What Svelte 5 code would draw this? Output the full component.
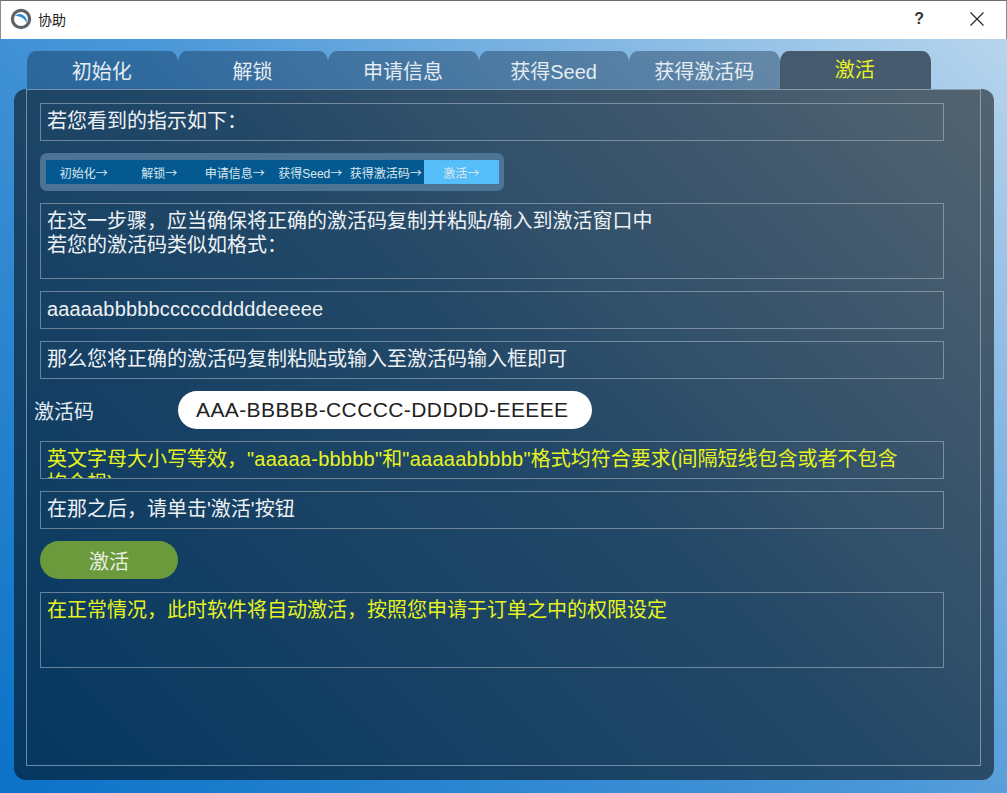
<script lang="ts">
	const tabs = ['初始化', '解锁', '申请信息', '获得Seed', '获得激活码', '激活'];
	const steps = ['初始化', '解锁', '申请信息', '获得Seed', '获得激活码', '激活'];
	const active = 5;
</script>

<div class="window">
	<header class="titlebar">
		<svg class="logo" width="22" height="22" viewBox="0 0 22 22" aria-hidden="true">
			<circle cx="11" cy="11" r="8.6" fill="#fff" stroke="#5c6268" stroke-width="3.2" />
			<path d="M5 8 A7 7 0 0 1 16.4 15 A11 11 0 0 0 5 8 Z" fill="#2b8ad6" />
		</svg>
		<span class="title">协助</span>
		<span class="spacer"></span>
		<span class="help">?</span>
		<svg class="close" width="14" height="14" viewBox="0 0 14 14" aria-hidden="true">
			<path d="M0.5 0.5 L13.5 13.5 M13.5 0.5 L0.5 13.5" stroke="#222" stroke-width="1.1" fill="none" />
		</svg>
	</header>

	<main class="body">
		<nav class="tabs">
			{#each tabs as tab, i}
				<div class="tab" class:active={i === active}>{tab}</div>
			{/each}
		</nav>

		<section class="panel">
			<div class="frame">
				<div class="box">若您看到的指示如下：</div>

				<div class="stepper">
					<div class="steps">
						{#each steps as step, i}
							<span class="step" class:current={i === active}>{step}<span class="arrow">→</span></span>
						{/each}
					</div>
				</div>

				<div class="box tall">在这一步骤，应当确保将正确的激活码复制并粘贴/输入到激活窗口中<br />若您的激活码类似如格式：</div>
				<div class="box latin">aaaaabbbbbcccccdddddeeeee</div>
				<div class="box">那么您将正确的激活码复制粘贴或输入至激活码输入框即可</div>

				<div class="field">
					<span class="label">激活码</span>
					<div class="input">AAA-BBBBB-CCCCC-DDDDD-EEEEE</div>
				</div>

				<div class="box yellow">英文字母大小写等效，<span class="quoted">"aaaaa-bbbbb"</span>和<span class="quoted">"aaaaabbbbb"</span>格式均符合要求(间隔短线包含或者不包含<br />均合规)</div>
				<div class="box">在那之后，请单击'激活'按钮</div>
				<button class="activate">激活</button>
				<div class="box tall yellow result">在正常情况，此时软件将自动激活，按照您申请于订单之中的权限设定</div>
			</div>
		</section>
	</main>
</div>

<style>
	:global(body) {
		margin: 0;
	}

	.window {
		width: 1007px;
		height: 793px;
		display: flex;
		flex-direction: column;
		font-family: "Liberation Sans", "Noto Sans CJK SC", sans-serif;
		background: linear-gradient(45deg, #0a72c8 0%, #4a97d8 50%, #bcd8ee 100%);
		overflow: hidden;
	}

	.titlebar {
		height: 36px;
		padding-bottom: 2px;
		flex-shrink: 0;
		display: flex;
		align-items: center;
		background: #fff;
		border-top: 1px solid #6e6e6e;
		border-left: 1px solid #8a8a8a;
		border-right: 1px solid #8a8a8a;
		color: #222;
		font-size: 14px;
	}

	.logo {
		margin-left: 9px;
		margin-right: 6px;
	}

	.spacer {
		flex: 1;
	}

	.help {
		font-size: 16px;
		font-weight: 700;
		color: #333;
		margin-right: 46px;
	}

	.close {
		margin-right: 22px;
	}

	.body {
		flex: 1;
		display: flex;
		flex-direction: column;
		padding: 12px 13px 13px 14px;
		min-height: 0;
	}

	.tabs {
		display: flex;
		padding-left: 13px;
		height: 38px;
		flex-shrink: 0;
	}

	.tab {
		width: 150.6px;
		display: flex;
		align-items: center;
		justify-content: center;
		box-sizing: border-box;
		border-radius: 9px 9px 0 0 / 11px 11px 0 0;
		background: rgba(8, 30, 55, 0.36);
		color: #e4ecf2;
		font-size: 20px;
		padding-right: 1px;
	}

	.tab.active {
		background: #465a6e;
		color: #e8f41e;
		padding-bottom: 3px;
	}

	.panel {
		flex: 1;
		display: flex;
		padding: 0 13px 14px 12px;
		background: rgba(0, 0, 0, 0.52);
		border-radius: 12px;
		min-height: 0;
	}

	.frame {
		flex: 1;
		box-sizing: border-box;
		display: flex;
		flex-direction: column;
		gap: 12px;
		padding: 13px 36px 0 13px;
		border: 1px solid rgba(190, 205, 220, 0.55);
	}

	.box {
		box-sizing: border-box;
		height: 38px;
		flex-shrink: 0;
		padding: 5px 6px 0;
		overflow: hidden;
		border: 1px solid rgba(190, 200, 210, 0.5);
		color: #eef2f5;
		font-size: 20px;
		line-height: 24px;
	}

	.box.tall {
		height: 76px;
	}

	.box.yellow {
		color: #e8f41e;
	}

	.latin {
		letter-spacing: 0.15px;
	}

	.quoted {
		letter-spacing: 0.25px;
	}

	.result {
		margin-top: 1px;
	}

	.stepper {
		width: 464px;
		height: 38px;
		box-sizing: border-box;
		flex-shrink: 0;
		padding: 7px 5px 7px 6px;
		border-radius: 7px;
		background: #4d7494;
	}

	.steps {
		display: flex;
		height: 24px;
		background: #045a90;
	}

	.step {
		width: 75.5px;
		flex-shrink: 0;
		display: flex;
		align-items: center;
		justify-content: center;
		white-space: nowrap;
		color: #dbe8f0;
		font-size: 12px;
	}

	.arrow {
		font-family: "Noto Sans CJK SC", sans-serif;
	}

	.step.current {
		background: #55bdf8;
	}

	.field {
		height: 38px;
		flex-shrink: 0;
		display: flex;
		align-items: center;
		margin-left: -6px;
	}

	.label {
		width: 144px;
		color: #e4ecf2;
		font-size: 20px;
	}

	.input {
		width: 414px;
		height: 38px;
		box-sizing: border-box;
		padding-left: 18px;
		display: flex;
		align-items: center;
		white-space: nowrap;
		overflow: hidden;
		border-radius: 19px;
		background: #fff;
		color: #222;
		font-size: 21px;
		letter-spacing: 0.4px;
	}

	.activate {
		width: 138px;
		height: 38px;
		flex-shrink: 0;
		border: none;
		border-radius: 19px;
		background: #6a9a3c;
		color: #e8eee0;
		font-family: inherit;
		font-size: 20px;
		padding: 0;
	}
</style>
